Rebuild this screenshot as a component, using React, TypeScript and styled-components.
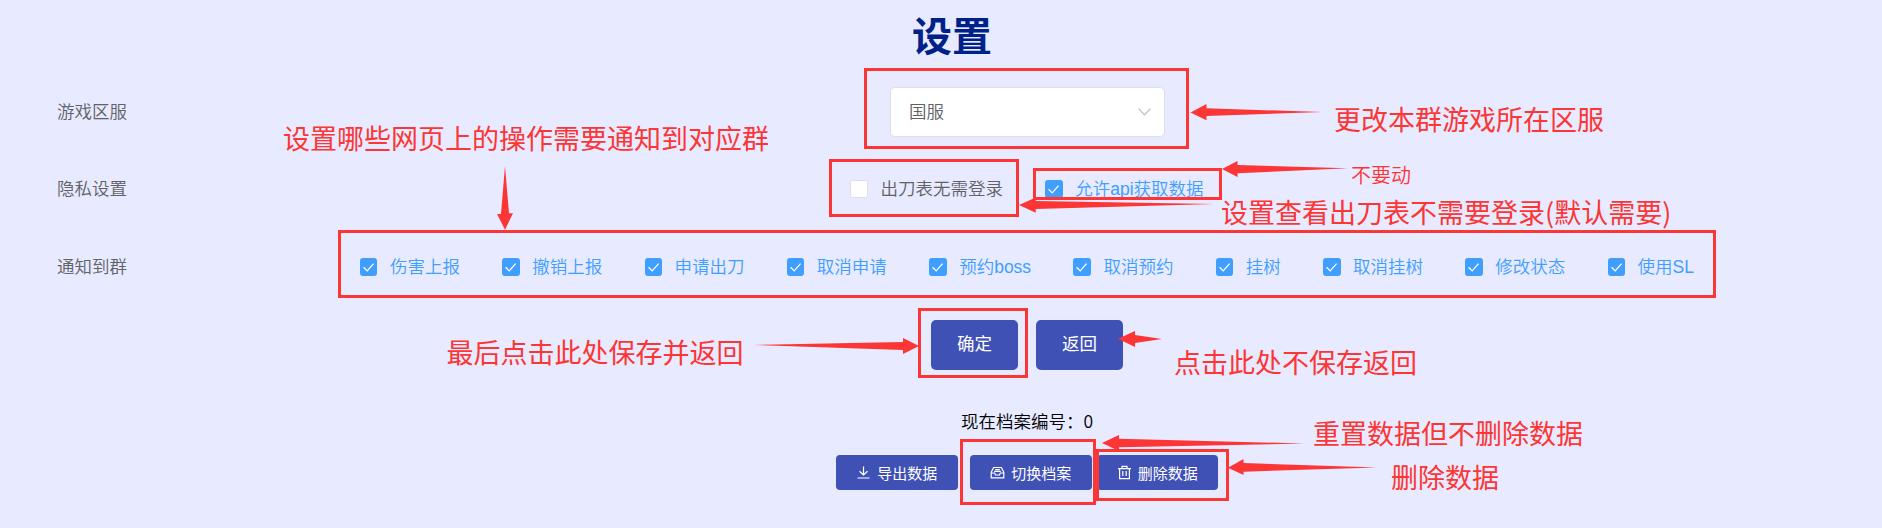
import React from "react";
import styled, { createGlobalStyle } from "styled-components";

const red = "#fc3535";

const GlobalStyle = createGlobalStyle`
  html, body { margin: 0; padding: 0; }
  body {
    background: #e8eaff;
    font-family: "Liberation Sans", "Noto Sans CJK SC", sans-serif;
    font-weight: 350;
  }
  *, *::before, *::after { box-sizing: border-box; }
`;

const Page = styled.div`
  position: relative;
  width: 1882px;
  height: 528px;
  overflow: hidden;
  padding: 0 35px 0 57px;
  background: #e8eaff;
`;

const Title = styled.h1`
  margin: 0;
  height: 87px;
  padding-top: 8px;
  text-align: center;
  font-size: 40px;
  line-height: 58px;
  font-weight: 700;
  color: #002288;
`;

const FormItem = styled.div<{ $after?: number }>`
  display: flex;
  align-items: center;
  height: 50px;
  margin-bottom: ${(p) => p.$after ?? 27.5}px;
  font-size: 17.5px;
  line-height: 50px;
`;

const Label = styled.label`
  width: 150px;
  flex: none;
  color: #606266;
`;

const Content = styled.div<{ $gap?: number }>`
  flex: 1;
  display: flex;
  justify-content: center;
  align-items: center;
  gap: ${(p) => p.$gap ?? 0}px;
`;

const Select = styled.div`
  display: flex;
  align-items: center;
  justify-content: space-between;
  width: 275px;
  height: 50px;
  padding: 0 12px 0 18.5px;
  border: 1px solid #dcdfe6;
  border-radius: 5px;
  background: #fff;
  color: #606266;
`;

const CheckItem = styled.label<{ $on: boolean }>`
  display: flex;
  align-items: center;
  gap: 12.5px;
  white-space: nowrap;
  color: ${(p) => (p.$on ? "#409eff" : "#606266")};
`;

const Box = styled.span<{ $on: boolean }>`
  display: flex;
  width: 17.5px;
  height: 17.5px;
  border-radius: 2.5px;
  border: 1px solid ${(p) => (p.$on ? "#409eff" : "#dcdfe6")};
  background: ${(p) => (p.$on ? "#409eff" : "#fff")};
`;

const Button = styled.button`
  width: 87.5px;
  height: 50px;
  padding: 0 0 5px;
  border: 0;
  border-radius: 5px;
  background: #3f51b5;
  color: #fff;
  font: 400 17.5px/45px "Noto Sans CJK SC", sans-serif;
`;

const Archive = styled.div`
  margin-left: 150px;
  height: 51px;
  text-align: center;
  font: 350 17.5px/34px "Noto Sans CJK SC", sans-serif;
  color: #000;
`;

const ArchiveActions = styled.div`
  display: flex;
  justify-content: center;
  margin-left: 150px;
`;

const MiniButton = styled.button<{ $after?: number }>`
  display: flex;
  align-items: center;
  justify-content: center;
  gap: 6px;
  width: 121.5px;
  height: 35px;
  margin-right: ${(p) => p.$after ?? 0}px;
  padding: 0;
  border: 0;
  border-radius: 4px;
  background: #3f51b5;
  color: #fff;
  font: 400 15px/35px "Noto Sans CJK SC", sans-serif;
`;

const Overlay = styled.div`
  position: absolute;
  inset: 0;
  pointer-events: none;
`;

const Frame = styled.div<{ $x: number; $y: number; $w: number; $h: number }>`
  position: absolute;
  left: ${(p) => p.$x}px;
  top: ${(p) => p.$y}px;
  width: ${(p) => p.$w}px;
  height: ${(p) => p.$h}px;
  border: 3px solid ${red};
`;

const Note = styled.div<{ $x: number; $y: number; $size?: number }>`
  position: absolute;
  left: ${(p) => p.$x}px;
  top: ${(p) => p.$y - 21}px;
  white-space: nowrap;
  color: ${red};
  font: ${(p) => (p.$size ? 350 : 400)} ${(p) => p.$size ?? 27}px/40px "Noto Sans CJK SC", sans-serif;
`;

const Arrows = styled.svg`
  position: absolute;
  inset: 0;
  fill: ${red};
`;

const Check = ({ on = true, children }: { on?: boolean; children: React.ReactNode }) => (
  <CheckItem $on={on}>
    <Box $on={on}>
      {on && (
        <svg width="15.5" height="15.5" viewBox="0 0 15.5 15.5" fill="none" stroke="#fff" strokeWidth="1.25">
          <path d="M2.6 8.2 6.2 11.9 12.6 4.6" />
        </svg>
      )}
    </Box>
    <span>{children}</span>
  </CheckItem>
);

const IconSvg = ({ d }: { d: string }) => (
  <svg width="15" height="15" viewBox="0 0 15 15" fill="none" stroke="#fff" strokeWidth="1.2">
    <path d={d} />
  </svg>
);

const notices = ["伤害上报", "撤销上报", "申请出刀", "取消申请", "预约boss", "取消预约", "挂树", "取消挂树", "修改状态", "使用SL"];

const frames = [
  [864, 68, 325, 81],
  [829, 159, 190, 58],
  [1033, 168, 189, 32],
  [338, 230, 1378, 68],
  [918, 308, 110, 70],
  [960, 439, 136, 66],
  [1096, 449, 133, 52],
];

const arrows = [
  "1190.5,112.5 1206.5,104 1206.5,108.3 1322,112 1206.5,116 1206.5,120.3",
  "1222,169 1237.5,161 1237.5,165 1348,168.3 1237.5,173.3 1237.5,177",
  "1019,205 1035.7,197.5 1035.7,201 1214,204 1035.7,209 1035.7,212.7",
  "505,229.7 497,214 501,214 505,166 509,213.3 513,213.3",
  "919,346 903,338 903,342 753,345 903,350 903,354",
  "1118,338.7 1135,331 1135,335 1162,339 1135,343 1135,347",
  "1102,443 1119,435 1119,438.7 1304,443.5 1119,447.3 1119,451",
  "1228,467.7 1243.5,459 1243.5,463 1377,467.5 1243.5,471.7 1243.5,475",
];

export default function App() {
  return (
    <Page>
      <GlobalStyle />
      <Title>设置</Title>
      <FormItem $after={27}>
        <Label>游戏区服</Label>
        <Content>
          <Select>
            国服
            <svg width="15" height="10" viewBox="0 0 15 10" fill="none" stroke="#c0c4cc" strokeWidth="1.3">
              <path d="M1.5 1.5 7.5 7.8 13.5 1.5" />
            </svg>
          </Select>
        </Content>
      </FormItem>
      <FormItem $after={28}>
        <Label>隐私设置</Label>
        <Content $gap={42.3}>
          <Check on={false}>出刀表无需登录</Check>
          <Check>允许api获取数据</Check>
        </Content>
      </FormItem>
      <FormItem $after={28}>
        <Label>通知到群</Label>
        <Content $gap={42.3}>
          {notices.map((n) => (
            <Check key={n}>{n}</Check>
          ))}
        </Content>
      </FormItem>
      <FormItem $after={34}>
        <Label />
        <Content $gap={17.5}>
          <Button>确定</Button>
          <Button>返回</Button>
        </Content>
      </FormItem>
      <Archive>现在档案编号：0</Archive>
      <ArchiveActions>
        <MiniButton $after={12.5}>
          <IconSvg d="M7.5 1.5V10M3.5 6.2 7.5 10 11.5 6.2M1.5 13H13.5" />
          导出数据
        </MiniButton>
        <MiniButton $after={5}>
          <IconSvg d="M1.2 7.2 3.6 2.5H11.4L13.8 7.2V12.8H1.2ZM1.2 8H4.6L5.6 10H9.4L10.4 8H13.8M5.2 4.6H9.8M4.2 6.4H10.8" />
          切换档案
        </MiniButton>
        <MiniButton>
          <IconSvg d="M1 3.6H14M5 3.4V1.4H10V3.4M2.6 3.6V13.6H12.4V3.6M5.8 6V11M9.2 6V11" />
          删除数据
        </MiniButton>
      </ArchiveActions>
      <Overlay>
        {frames.map(([x, y, w, h]) => (
          <Frame key={`${x}-${y}`} $x={x} $y={y} $w={w} $h={h} />
        ))}
        <Arrows width="1882" height="528">
          {arrows.map((points) => (
            <polygon key={points} points={points} />
          ))}
        </Arrows>
        <Note $x={283} $y={139}>设置哪些网页上的操作需要通知到对应群</Note>
        <Note $x={1334} $y={119.5}>更改本群游戏所在区服</Note>
        <Note $x={1351} $y={176} $size={20}>不要动</Note>
        <Note $x={1221} $y={213}>设置查看出刀表不需要登录(默认需要)</Note>
        <Note $x={446.5} $y={352.5}>最后点击此处保存并返回</Note>
        <Note $x={1174} $y={362.5}>点击此处不保存返回</Note>
        <Note $x={1313} $y={434}>重置数据但不删除数据</Note>
        <Note $x={1391} $y={477.5}>删除数据</Note>
      </Overlay>
    </Page>
  );
}
